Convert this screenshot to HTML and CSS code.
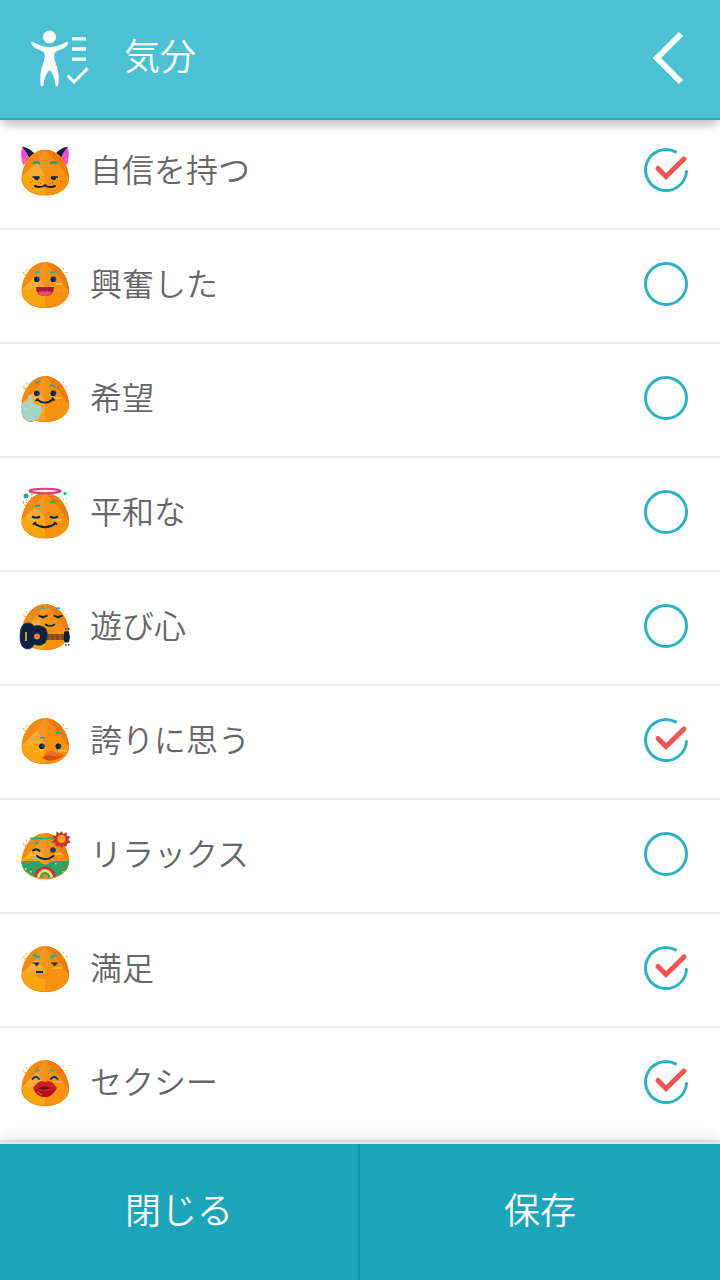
FILE: index.html
```
<!DOCTYPE html>
<html lang="ja">
<head>
    <meta charset="UTF-8">
    <meta name="viewport" content="width=device-width, initial-scale=1.0">
    <title>気分</title>
    <link rel="stylesheet" href="styles.css">
</head>
<body>
    <!-- shared shapes -->
    <svg class="defs" aria-hidden="true">
        <defs>
            <clipPath id="headClip">
                <path d="M35 12.3C44 12.3 50.5 18 54.500 25C57.500 30.500 59 36 59 41C59 50.500 48.500 58 35 58S11.500 50.500 11.500 41C11.500 36 13 30.500 16 25C20 18 26.500 12.300 35 12.300Z"/>
            </clipPath>
            <g id="head">
                <g clip-path="url(#headClip)">
                    <path fill="#fba60f" d="M10 10h50v50H10z"/>
                    <path fill="#f8920e" d="M35 10h25v50H35z"/>
                    <path fill="#f08a12" d="M35 12L27 25L10 41V10z"/>
                    <path fill="#fbab35" d="M27 24L13 39L35 38z"/>
                    <path fill="#f6952a" d="M35 12L27 24L35 38z"/>
                    <path fill="#ee7c0a" d="M35 12L49 27L60 43V10z"/>
                    <path fill="none" stroke="#ee8a0c" stroke-width="1.4" d="M11.500 41C11.500 50.500 21 58 35 58S59 50.500 59 41"/>
                </g>
                <g fill="#f8a72b">
                    <path d="M13 22h1.4v1.4H13zM16 19h1v1.4h-1zM14.5 24h1.4v1.4h-1.4zM53 18h1v1h-1zM55.5 22h2v1h-2zM48 40h1.6v1.6H48zM53 39h1.2v1.2H53zM57 40h1v1h-1z"/>
                </g>
            </g>
            <g id="cheeks" fill="#fbb540">
                <path d="M20 33h8v1.8h-8zM43 33h9v1.8h-9z"/>
            </g>
            <g id="eyes">
                <circle cx="27" cy="29.3" r="2.8" fill="#123a6b"/>
                <path fill="#0b2344" d="M27 26.5a2.8 2.8 0 0 0 0 5.6z"/>
                <circle cx="43.5" cy="29.3" r="2.8" fill="#123a6b"/>
                <path fill="#0b2344" d="M43.5 26.5a2.8 2.8 0 0 0 0 5.6z"/>
            </g>
        </defs>
    </svg>

    <header class="header">
        <svg class="header-icon" viewBox="84 78 192 192" aria-hidden="true">
            <circle cx="148.5" cy="111" r="19.5" fill="#fff"/>
            <path fill="#fff" d="M93 128Q95 124 101 127Q123 141 149 141Q176 141 198 126Q204 123 205 129Q203 139 187 147Q167 154 164 159Q161 170 164 181Q174 205 176 226Q177 244 174 257Q171 260 167 257Q163 232 158 222Q152 212 149 212Q145 212 139 223Q133 235 130 257Q126 260 122 257Q119 240 122 220Q124 204 132 183Q136 171 133 160Q131 154 113 148Q97 141 93 128Z"/>
            <path stroke="#fff" stroke-width="10" d="M216 116.500h42M216 147h42M216 177.500h42"/>
            <path fill="none" stroke="#fff" stroke-width="9" d="M203 227L222 246L263 205"/>
        </svg>
        <h1 class="title">気分</h1>
        <button class="back" type="button" aria-label="戻る">
            <svg viewBox="0 0 32 54" aria-hidden="true"><path fill="none" stroke="#fff" stroke-width="6" d="M29 3L5 27L29 51"/></svg>
        </button>
    </header>

    <main class="mood-list">
        <label class="mood">
            <svg class="face" viewBox="0 -1 70 70" aria-hidden="true">
                <path fill="#f445d9" d="M12 11Q10 20 13 29L22 23Q18 15 12 11zM58 11Q60 20 57 29L48 23Q52 15 58 11z"/>
                <path fill="#0d2342" d="M12 10.500Q20 12 25 18L20 23Q17 16 12 10.500zM58 10.500Q50 12 45 18L50 23Q53 16 58 10.500z"/>
                <path fill="#fb8b63" d="M14 23h1.500v1.500H14zM16 20h1v1h-1zM55 22h1.500v1.500H55zM54 19h1v1h-1z"/>
                <use href="#head" y="1.500"/>
                <path fill="none" stroke="#199f91" stroke-width="2.400" d="M23 27.500Q26 25 30 27.500M40 27.500Q44 25 47 27.500"/>
                <path fill="#103563" d="M24 41h5.500v1.500q-2.500 3.500-5.500 0zM41 41h5.500q-1 5-5.500 2z"/>
                <path stroke="#0c2340" stroke-width="1.300" d="M22.500 41h7M41 41h7"/>
                <path fill="none" stroke="#0c2340" stroke-width="1.900" stroke-linecap="round" d="M25 50Q30 52 34 50L35 49L36 50Q40 52 45 50"/>
                <path fill="#a85316" d="M28 46h1v1h-1zM30 47h1v1h-1zM27 44h1v1h-1zM40 47h1v1h-1zM42 46h1v1h-1zM20 46h1v1h-1zM50 45h1v1h-1z"/>
            </svg>
            <span class="name">自信を持つ</span>
            <span class="tick">
                <input type="checkbox" checked>
                <svg viewBox="0 0 48 48" aria-hidden="true"><circle class="off" cx="24" cy="24" r="20.500"/><path class="on" d="M33.600 5.900A20.500 20.500 0 1 0 44.500 25.500"/><path class="mark" d="M16 22.500L24 30.500L42 13"/></svg>
            </span>
        </label>
        <label class="mood">
            <svg class="face" viewBox="0 -1 70 70" aria-hidden="true">
                <use href="#head"/>
                <use href="#cheeks"/>
                <use href="#eyes"/>
                <path fill="none" stroke="#16b5a0" stroke-width="1.800" d="M25.500 23.500Q27 21.500 30 22.500M40 22.500Q43 21.500 45 23.500"/>
                <path fill="#a81b3e" d="M26 37h18q0 9-9 9t-9-9z"/>
                <path fill="#e84a7c" d="M28 42.500q3-2 7-1q4-1 7 1q-2 3.500-7 3.500t-7-3.500z"/>
            </svg>
            <span class="name">興奮した</span>
            <span class="tick">
                <input type="checkbox">
                <svg viewBox="0 0 48 48" aria-hidden="true"><circle class="off" cx="24" cy="24" r="20.500"/><path class="on" d="M33.600 5.900A20.500 20.500 0 1 0 44.500 25.500"/><path class="mark" d="M16 22.500L24 30.500L42 13"/></svg>
            </span>
        </label>
        <label class="mood">
            <svg class="face" viewBox="0 -1 70 70" aria-hidden="true">
                <use href="#head"/>
                <use href="#cheeks"/>
                <use href="#eyes"/>
                <path fill="none" stroke="#16a58e" stroke-width="1.900" d="M25.500 20Q27 17.500 30 18M40 21.500Q43 21 45 23"/>
                <path fill="none" stroke="#0c2340" stroke-width="1.900" stroke-linecap="round" d="M27 35.500Q35 42 43.500 35M26 36.500l2-1.500M42.500 34l1.500 2"/>
                <path fill="#f06b23" d="M12 52q3 6 11 6l-5-6z"/>
                <path fill="#a4d5c2" d="M18 38V33q0-2 2-2t2 2l1 6q9 2 10 7l-5 9q-5 4-12 1q-5-4-5-10t2-8z"/>
                <path fill="none" stroke="#bde3d3" stroke-width=".8" d="M18 39l4 2M13 44l4 1"/>
            </svg>
            <span class="name">希望</span>
            <span class="tick">
                <input type="checkbox">
                <svg viewBox="0 0 48 48" aria-hidden="true"><circle class="off" cx="24" cy="24" r="20.500"/><path class="on" d="M33.600 5.900A20.500 20.500 0 1 0 44.500 25.500"/><path class="mark" d="M16 22.500L24 30.500L42 13"/></svg>
            </span>
        </label>
        <label class="mood">
            <svg class="face" viewBox="0 -1 70 70" aria-hidden="true">
                <use href="#head" y="2.500"/>
                <ellipse cx="35" cy="13" rx="15.500" ry="2.200" fill="#fde3ee" stroke="#da3f79" stroke-width="2"/>
                <circle cx="16" cy="18" r="2.500" fill="#18b08a"/>
                <circle cx="55" cy="15.500" r="1.600" fill="#18b08a"/>
                <path fill="#79bd5b" d="M21 16h1.500v1.500H21zM21 19h1v1h-1zM56 20h1v1h-1z"/>
                <path fill="#f7932a" d="M12.500 23H14v1.500h-1.500zM16 24h1v1h-1z"/>
                <path fill="none" stroke="#18aa92" stroke-width="1.900" d="M25.500 29Q27 27 30 28M40 24.500Q43 23.500 45 25"/>
                <use href="#cheeks" y="8"/>
                <path fill="none" stroke="#0f2d54" stroke-width="2.200" d="M22 38.500Q26 41 30 38.500M40 38.500Q44 41 48 38.500"/>
                <path fill="none" stroke="#0c2340" stroke-width="1.900" stroke-linecap="round" d="M24.500 45.500Q35 53 45.500 45.500M23.500 46l2-1.500M44.500 44.500l2 1.500"/>
            </svg>
            <span class="name">平和な</span>
            <span class="tick">
                <input type="checkbox">
                <svg viewBox="0 0 48 48" aria-hidden="true"><circle class="off" cx="24" cy="24" r="20.500"/><path class="on" d="M33.600 5.900A20.500 20.500 0 1 0 44.500 25.500"/><path class="mark" d="M16 22.500L24 30.500L42 13"/></svg>
            </span>
        </label>
        <label class="mood">
            <svg class="face" viewBox="0 -1 70 70" aria-hidden="true">
                <use href="#head"/>
                <path fill="none" stroke="#18b6a0" stroke-width="1.500" d="M31 16.500q2-1 4 0M46 16.500q2-1 4 0"/>
                <path fill="#123868" d="M30 24q3 1 6 0q-3 5-6 0zM45 24q3 1 6 0q-3 5-6 0z"/>
                <path fill="none" stroke="#0c2340" stroke-width="1.600" d="M28.500 23.500q4.500 2.500 9 0M43.500 23.500q4.500 2.500 9 0"/>
                <path fill="none" stroke="#0c2340" stroke-width="1.700" stroke-linecap="round" d="M35.500 32.500q4.500 3 9 0"/>
                <path fill="#8a4a1f" d="M34 42h21v6H34z"/>
                <path stroke="#c4742a" stroke-width=".6" d="M40 42v6M45 42v6M50 42v6"/>
                <path fill="#0a2140" stroke="#163d6b" stroke-width=".8" d="M14 32q6-3 10 2q7-2 12 3q3 7-1 14q-5 4-11 1q-1 5-7 5q-7-1-7-12q0-10 4-13z"/>
                <circle cx="27" cy="44.5" r="3" fill="#f5801e"/>
                <path stroke="#f3a12b" stroke-width="1.800" d="M16 40v9"/>
                <path fill="#0a2140" d="M54 40q3-2 5 0l1 5-1 5q-3 2-5-1z"/>
                <path fill="#182d4c" d="M55 36h1.500v1.500H55zM58 36h1.500v1.500H58zM55 52h1.500v1.500H55zM58 52h1.500v1.500H58z"/>
            </svg>
            <span class="name">遊び心</span>
            <span class="tick">
                <input type="checkbox">
                <svg viewBox="0 0 48 48" aria-hidden="true"><circle class="off" cx="24" cy="24" r="20.500"/><path class="on" d="M33.600 5.900A20.500 20.500 0 1 0 44.500 25.500"/><path class="mark" d="M16 22.500L24 30.500L42 13"/></svg>
            </span>
        </label>
        <label class="mood">
            <svg class="face" viewBox="0 -1 70 70" aria-hidden="true">
                <use href="#head"/>
                <use href="#cheeks" x="5" y="11"/>
                <use href="#eyes" x="5" y="11"/>
                <path fill="none" stroke="#18b296" stroke-width="1.800" d="M30 32q3-1 5 1M46 27.500q2-1.500 4 0"/>
                <path fill="#f46a21" d="M32 52Q37 45 41 45Q48 46 54 49Q46 56 37 54z"/>
                <path fill="#d84a17" d="M32 52Q37 48 43 50Q49 51 54 49Q46 56 37 54z"/>
            </svg>
            <span class="name">誇りに思う</span>
            <span class="tick">
                <input type="checkbox" checked>
                <svg viewBox="0 0 48 48" aria-hidden="true"><circle class="off" cx="24" cy="24" r="20.500"/><path class="on" d="M33.600 5.900A20.500 20.500 0 1 0 44.500 25.500"/><path class="mark" d="M16 22.500L24 30.500L42 13"/></svg>
            </span>
        </label>
        <label class="mood">
            <svg class="face" viewBox="0 -1 70 70" aria-hidden="true">
                <use href="#head" y="1"/>
                <g clip-path="url(#headClip)">
                    <path fill="#22a866" d="M10 41h50v19H10z"/>
                    <path fill="#f9a01c" d="M29 41h12q-6 7-12 0z"/>
                    <path fill="#cf2e36" d="M24 58a11 11.500 0 0 1 22 0z"/>
                    <path fill="#f9e08a" d="M27 58a8 9 0 0 1 16 0z"/>
                    <path fill="#2b9f5f" d="M29.500 58a5.500 6 0 0 1 11 0z"/>
                    <path fill="#f48030" d="M31.500 58a3.500 4 0 0 1 7 0z"/>
                    <path fill="#e74c3c" d="M18 42h2v2h-2zM22 47h2v2h-2zM49 46h2v2h-2zM54 43h2v2h-2z"/>
                    <path fill="#b9e7b8" d="M15 48h1.500v1.500H15zM20 51h1.500v1.500H20zM45 43h1.500v1.500H45zM52 51h1.500v1.500H52z"/>
                </g>
                <path stroke="#20ad7c" stroke-width="1.600" d="M20 18.500h24"/>
                <path fill="none" stroke="#18b296" stroke-width="1.600" d="M25 24q2-2 4-1M41 22h4"/>
                <path stroke="#fbbd52" stroke-width="1.500" d="M20 35h6M45 34h7"/>
                <path fill="none" stroke="#0c2340" stroke-width="2" stroke-linecap="round" d="M23 30.500q4-2.500 6.500.5M27 36q8 6.500 16.500 0"/>
                <circle cx="43" cy="30" r="2.8" fill="#123a6b"/>
                <path fill="#cf3027" d="M51.500 11l2 3 3-2 .5 4 3.500.5-2 3 2 3-3.500 1-.5 3.500-3-1.500-2 2.500-2-2.500-3.500 1-.5-3.500-3-1 2-3-2-3 3.500-.5.500-4 3 2z"/>
                <circle cx="51.5" cy="19" r="4" fill="#ffa622"/>
            </svg>
            <span class="name">リラックス</span>
            <span class="tick">
                <input type="checkbox">
                <svg viewBox="0 0 48 48" aria-hidden="true"><circle class="off" cx="24" cy="24" r="20.500"/><path class="on" d="M33.600 5.900A20.500 20.500 0 1 0 44.500 25.500"/><path class="mark" d="M16 22.500L24 30.500L42 13"/></svg>
            </span>
        </label>
        <label class="mood">
            <svg class="face" viewBox="0 -1 70 70" aria-hidden="true">
                <use href="#head"/>
                <use href="#cheeks"/>
                <path fill="none" stroke="#19b79a" stroke-width="2.400" d="M23 20.500q3 2.500 7 2.500M40 23.500q3-.5 6-3"/>
                <path fill="#123a6b" d="M24 29h5q-1 4-3 3zM42 29h5q-1 4-3 3z"/>
                <path stroke="#0c2340" stroke-width="1.200" d="M22.500 29h7M41 29h7"/>
                <path fill="#f18e13" d="M25 40h10v5q-7 0-10-5z"/>
                <path stroke="#0c2340" stroke-width="2" d="M26 38h7"/>
            </svg>
            <span class="name">満足</span>
            <span class="tick">
                <input type="checkbox" checked>
                <svg viewBox="0 0 48 48" aria-hidden="true"><circle class="off" cx="24" cy="24" r="20.500"/><path class="on" d="M33.600 5.900A20.500 20.500 0 1 0 44.500 25.500"/><path class="mark" d="M16 22.500L24 30.500L42 13"/></svg>
            </span>
        </label>
        <label class="mood">
            <svg class="face" viewBox="0 -1 70 70" aria-hidden="true">
                <use href="#head"/>
                <use href="#cheeks"/>
                <path fill="none" stroke="#18b49c" stroke-width="1.800" d="M25.500 23.500q2-2 4-1M40 22.500q2-1 4 1"/>
                <path fill="none" stroke="#11335f" stroke-width="2" stroke-linecap="round" d="M22.500 31q3.500-4.500 6.500 0M41 31q3-4.500 6.500 0"/>
                <path fill="#ce1e20" d="M23 40Q28 33 32 33L35 34L38 33Q42 33 47 40Q42 49 35 49Q27 49 23 40z"/>
                <path fill="#b01218" d="M24 41Q35 45 46 41Q42 49 35 49Q27 49 24 41z"/>
                <path fill="#6b0d18" d="M28 40q7-3 13 0q-7 3-13 0z"/>
                <path fill="none" stroke="#eb6758" stroke-width="1" d="M27 43q2 3 5 4"/>
            </svg>
            <span class="name">セクシー</span>
            <span class="tick">
                <input type="checkbox" checked>
                <svg viewBox="0 0 48 48" aria-hidden="true"><circle class="off" cx="24" cy="24" r="20.500"/><path class="on" d="M33.600 5.900A20.500 20.500 0 1 0 44.500 25.500"/><path class="mark" d="M16 22.500L24 30.500L42 13"/></svg>
            </span>
        </label>
    </main>

    <footer class="actions">
        <button type="button" class="action">閉じる</button>
        <button type="button" class="action">保存</button>
    </footer>
</body>
</html>
```
FILE: styles.css
```
* {
    box-sizing: border-box;
}
body {
    margin: 0;
    min-height: 100vh;
    display: flex;
    flex-direction: column;
    background: #fff;
    color: #666;
    font-family: "Noto Sans CJK JP", sans-serif;
    font-weight: 350;
}
button {
    border: none;
    background: none;
    padding: 0;
    font: inherit;
    color: inherit;
    cursor: pointer;
}
svg {
    display: block;
}
.defs {
    position: absolute;
    width: 0;
    height: 0;
}

/* header */
.header {
    position: relative;
    z-index: 1;
    display: flex;
    align-items: center;
    gap: 32px;
    padding: 26px 36px 28px 28px;
    background: #4cc1d3;
    border-bottom: 2px solid #38aaba;
    box-shadow: 0 6px 10px -2px rgba(0,0,0,0.28);
    color: #fff;
}
.header-icon {
    width: 64px;
    height: 64px;
}
.title {
    flex: 1;
    margin: 0;
    padding-bottom: 8px;
    font-size: 36px;
    line-height: 56px;
    font-weight: inherit;
}
.back svg {
    width: 32px;
    height: 54px;
}

/* mood rows */
.mood-list {
    flex: 1;
    margin-top: -4px;
}
.mood {
    display: flex;
    align-items: center;
    gap: 10px;
    padding: 19px 30px 23px 10px;
    border-bottom: 2px solid #ececec;
    cursor: pointer;
}
.face {
    width: 70px;
    height: 70px;
}
.name {
    flex: 1;
    padding-bottom: 4px;
    font-size: 32px;
    line-height: 48px;
}
.tick {
    position: relative;
    width: 48px;
    height: 48px;
}
.tick input {
    position: absolute;
    inset: 0;
    width: 100%;
    height: 100%;
    margin: 0;
    opacity: 0;
    cursor: pointer;
}
.off, .on, .mark {
    fill: none;
    stroke: #2bb2c8;
    stroke-width: 3;
    stroke-linecap: round;
}
.mark {
    stroke: #f35353;
    stroke-width: 5;
}
.on, .mark { display: none; }
.tick input:checked + svg .on,
.tick input:checked + svg .mark { display: inline; }
.tick input:checked + svg .off { display: none; }

/* footer */
.actions {
    position: relative;
    display: grid;
    grid-template-columns: 1fr 1fr;
    border-top: 2px solid #e0ebe9;
    box-shadow: 0 -2px 16px rgba(0,0,0,0.14);
}
.action {
    height: 136px;
    padding-bottom: 8px;
    background: #1ca5ba;
    color: #fff;
    font-size: 36px;
}
.action:first-child {
    border-right: 2px solid #0f98ad;
}
```
